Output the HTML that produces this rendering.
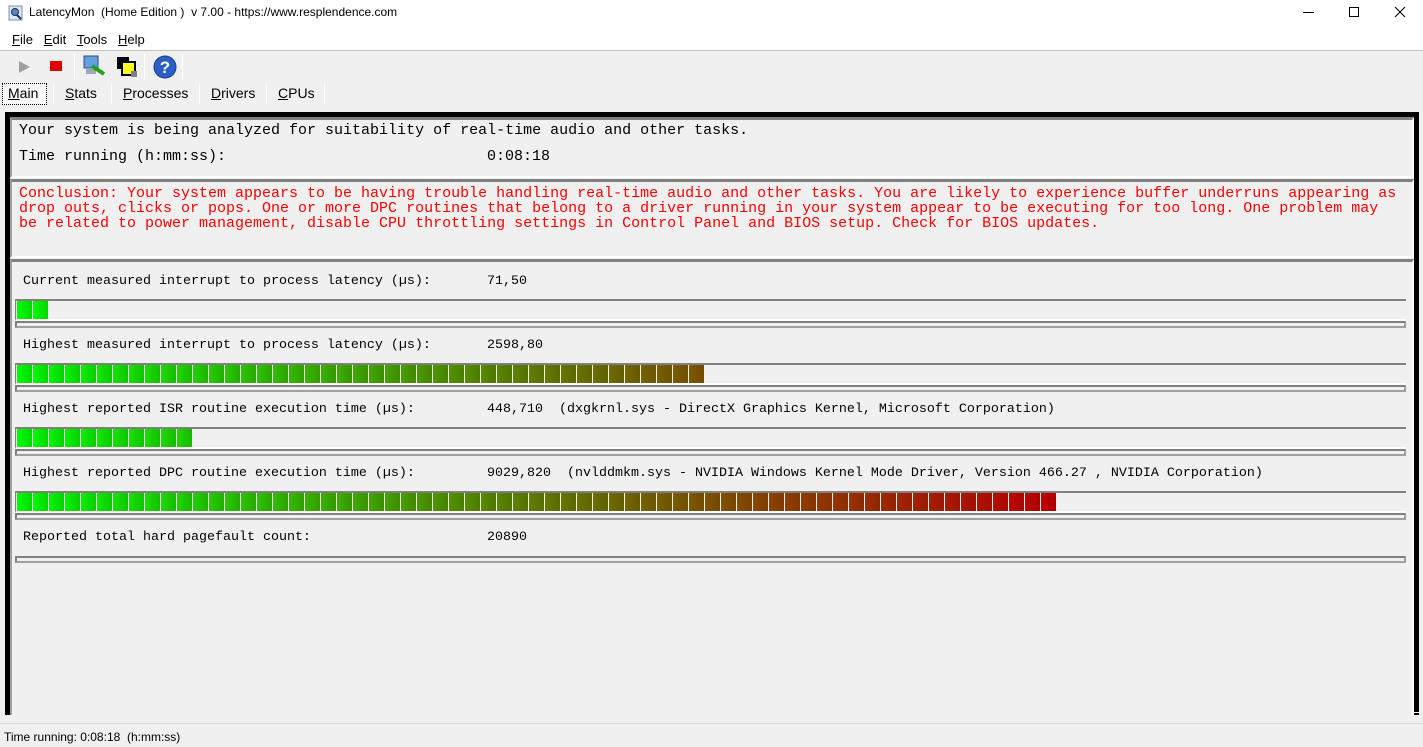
<!DOCTYPE html>
<html><head><meta charset="utf-8"><style>
*{margin:0;padding:0;box-sizing:border-box}
body{width:1423px;height:747px;background:#f0f0f0;position:relative;overflow:hidden;font-family:"Liberation Sans",sans-serif;font-size:12px;color:#000}
.a{position:absolute}
.mono{font-family:"Liberation Mono","DejaVu Sans Mono",monospace;white-space:pre}
.panel{position:absolute;left:10px;right:9px;border-top:3px solid #808080;border-left:2px solid #a0a0a0;border-right:2px solid #fff;border-bottom:2px solid #fff;background:#f0f0f0}
.track{position:absolute;left:15px;width:1391px;height:22px;border-top:2px solid #808080;border-bottom:2px solid #fff;border-left:1px solid #808080}
.thin{position:absolute;left:15px;width:1391px;height:7px;border:2px solid #808080;border-bottom-color:#a0a0a0;border-right-color:#a0a0a0;background:#f0f0f0}
.seg{position:absolute;top:0;height:18px;width:15px}
.lbl{position:absolute;font-size:13.33px}
.tab{position:absolute;top:85px;font-size:14px}
.sep{position:absolute;top:83px;width:1px;height:21px;background:#c8c8c8;border-right:1px solid #fff}
</style></head><body>
<div class="a" style="left:0;top:0;width:1423px;height:50px;background:#fff"></div>
<div class="a" style="left:0;top:50px;width:1423px;height:1px;background:#c0c0c0"></div>
<svg class="a" style="left:8px;top:5px" width="16" height="16"><rect x="1" y="1" width="13" height="14" fill="#dfe8f0" stroke="#7890a8"/><circle cx="7" cy="7" r="3.5" fill="#6080c0" stroke="#203060"/><line x1="9" y1="10" x2="13" y2="14" stroke="#203060" stroke-width="2"/></svg>
<div class="a" style="left:29px;top:5px;font-size:12px">LatencyMon&nbsp; (Home Edition )&nbsp; v 7.00 - https://www.resplendence.com</div>
<div class="a" style="left:1303px;top:12px;width:11px;height:1px;background:#000"></div>
<div class="a" style="left:1349px;top:7px;width:10px;height:10px;border:1px solid #000"></div>
<svg class="a" style="left:1394px;top:6px" width="12" height="12"><path d="M1 1L11 11M11 1L1 11" stroke="#000" stroke-width="1"/></svg>
<div class="a" style="left:12px;top:32px;font-size:13px"><u>F</u>ile&nbsp;&nbsp; <u>E</u>dit&nbsp;&nbsp; <u>T</u>ools&nbsp;&nbsp; <u>H</u>elp</div>
<svg class="a" style="left:18px;top:60px" width="14" height="14"><path d="M1 1L12 7L1 13Z" fill="#a0a0a0"/></svg>
<div class="a" style="left:50px;top:61px;width:12px;height:10px;background:#e00000"></div>
<div class="a" style="left:74px;top:54px;width:1px;height:25px;background:#b0b0b0;border-right:1px solid #fff"></div>
<svg class="a" style="left:82px;top:54px" width="26" height="24"><rect x="2" y="2" width="14" height="12" fill="#60a0e0" stroke="#305080"/><rect x="4" y="15" width="10" height="5" fill="#a0a8b8"/><path d="M10 12L22 20" stroke="#20a020" stroke-width="4"/></svg>
<svg class="a" style="left:115px;top:55px" width="24" height="24"><rect x="2" y="2" width="12" height="12" fill="#000"/><rect x="7" y="7" width="13" height="13" fill="#ffff20" stroke="#000" stroke-width="2"/><rect x="16" y="16" width="6" height="6" fill="#808080"/></svg>
<div class="a" style="left:144px;top:54px;width:1px;height:25px;background:#b0b0b0;border-right:1px solid #fff"></div>
<svg class="a" style="left:153px;top:55px" width="24" height="24"><circle cx="12" cy="12" r="11" fill="#2a5ec8" stroke="#1a3a88"/><text x="12" y="18" text-anchor="middle" font-family="Liberation Sans" font-weight="bold" font-size="17" fill="#fff">?</text></svg>
<div class="a" style="left:182px;top:54px;width:1px;height:25px;background:#b0b0b0;border-right:1px solid #fff"></div>
<div class="a" style="left:2px;top:83px;width:45px;height:22px;border:1px dotted #000;background:#f8f8f8"></div>
<div class="tab" style="left:8px"><u>M</u>ain</div>
<div class="sep" style="left:53px"></div>
<div class="tab" style="left:65px"><u>S</u>tats</div>
<div class="sep" style="left:111px"></div>
<div class="tab" style="left:123px"><u>P</u>rocesses</div>
<div class="sep" style="left:199px"></div>
<div class="tab" style="left:211px"><u>D</u>rivers</div>
<div class="sep" style="left:266px"></div>
<div class="tab" style="left:278px"><u>C</u>PUs</div>
<div class="sep" style="left:324px"></div>
<div class="a" style="left:5px;top:112px;width:1414px;height:603px;border:5px solid #000;border-bottom:none"></div>
<div class="a" style="left:10px;top:712px;width:1410px;height:3px;border-top:1px solid #fff;"></div>
<div class="panel" style="top:117px;height:61px"></div>
<div class="a mono" style="left:19px;top:122px;font-size:15px">Your system is being analyzed for suitability of real-time audio and other tasks.</div>
<div class="a mono" style="left:19px;top:148px;font-size:15px">Time running (h:mm:ss):</div>
<div class="a mono" style="left:487px;top:148px;font-size:15px">0:08:18</div>
<div class="panel" style="top:179px;height:79px"></div>
<div class="a mono" style="left:19px;top:186px;font-size:15px;line-height:15px;color:#ff0000">Conclusion: Your system appears to be having trouble handling real-time audio and other tasks. You are likely to experience buffer underruns appearing as
drop outs, clicks or pops. One or more DPC routines that belong to a driver running in your system appear to be executing for too long. One problem may
be related to power management, disable CPU throttling settings in Control Panel and BIOS setup. Check for BIOS updates.</div>
<div class="panel" style="top:259px;height:456px;border-bottom:none"></div>
<div id="rows"></div>
<div class="a" style="left:0;top:723px;width:1423px;height:1px;background:#d8d8d8"></div>
<div class="a" style="left:4px;top:730px;font-size:12px">Time running: 0:08:18&nbsp; (h:mm:ss)</div>
<script>
var rows=[["Current measured interrupt to process latency (µs):","71,50",2],
["Highest measured interrupt to process latency (µs):","2598,80",43],
["Highest reported ISR routine execution time (µs):","448,710  (dxgkrnl.sys - DirectX Graphics Kernel, Microsoft Corporation)",11],
["Highest reported DPC routine execution time (µs):","9029,820  (nvlddmkm.sys - NVIDIA Windows Kernel Mode Driver, Version 466.27 , NVIDIA Corporation)",65],
["Reported total hard pagefault count:","20890",0]];
var h="";
rows.forEach(function(r,k){
 var y=272+64*k;
 h+='<div class="lbl mono" style="left:23px;top:'+(y+2)+'px">'+r[0]+'</div>';
 h+='<div class="lbl mono" style="left:487px;top:'+(y+2)+'px">'+r[1]+'</div>';
 if(k<4){
  var s='';
  for(var i=0;i<r[2];i++){var R=Math.round(192*i/64),G=Math.round(255*(1-i/64));
   var c='rgb('+R+','+G+',0)',c2='rgb('+Math.round(R*0.9)+','+Math.round(G*0.85)+',0)';
   s+='<div class="seg" style="left:'+(1+16*i)+'px;background:linear-gradient(90deg,'+c+','+c2+')"></div>';}
  h+='<div class="track" style="top:'+(y+27)+'px">'+s+'</div>';
  h+='<div class="thin" style="top:'+(y+49)+'px;height:7px"></div>';
 } else {
  h+='<div class="thin" style="top:'+(y+28)+'px;height:7px"></div>';
 }
});
document.getElementById('rows').innerHTML=h;
</script>
</body></html>
